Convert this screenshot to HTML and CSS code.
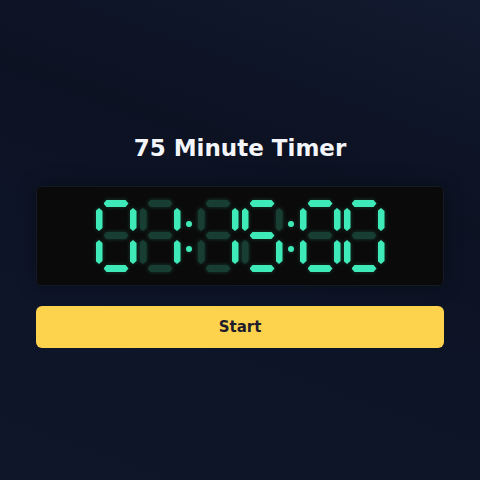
FILE: index.html
```html
<!DOCTYPE html>
<html lang="en">
<head>
<meta charset="utf-8">
<title>75 Minute Timer</title>
<link rel="stylesheet" href="styles.css">
</head>
<body>
<main class="timer">
  <h1 class="title">75 Minute Timer</h1>
  <div class="panel">
    <div class="clock" aria-label="01:15:00">
      <div class="pair">
        <div class="digit">
          <span class="seg h a on"></span><span class="seg v f on"></span><span class="seg v b on"></span><span class="seg h g"></span><span class="seg v e on"></span><span class="seg v c on"></span><span class="seg h d on"></span>
        </div>
        <div class="digit">
          <span class="seg h a"></span><span class="seg v f"></span><span class="seg v b on"></span><span class="seg h g"></span><span class="seg v e"></span><span class="seg v c on"></span><span class="seg h d"></span>
        </div>
      </div>
      <div class="colon"><span class="dot"></span><span class="dot"></span></div>
      <div class="pair">
        <div class="digit">
          <span class="seg h a"></span><span class="seg v f"></span><span class="seg v b on"></span><span class="seg h g"></span><span class="seg v e"></span><span class="seg v c on"></span><span class="seg h d"></span>
        </div>
        <div class="digit">
          <span class="seg h a on"></span><span class="seg v f on"></span><span class="seg v b"></span><span class="seg h g on"></span><span class="seg v e"></span><span class="seg v c on"></span><span class="seg h d on"></span>
        </div>
      </div>
      <div class="colon"><span class="dot"></span><span class="dot"></span></div>
      <div class="pair">
        <div class="digit">
          <span class="seg h a on"></span><span class="seg v f on"></span><span class="seg v b on"></span><span class="seg h g"></span><span class="seg v e on"></span><span class="seg v c on"></span><span class="seg h d on"></span>
        </div>
        <div class="digit">
          <span class="seg h a on"></span><span class="seg v f on"></span><span class="seg v b on"></span><span class="seg h g"></span><span class="seg v e on"></span><span class="seg v c on"></span><span class="seg h d on"></span>
        </div>
      </div>
    </div>
  </div>
  <button class="start" type="button">Start</button>
</main>
</body>
</html>
```
FILE: styles.css
```css
html, body {
  margin: 0;
  height: 100%;
}
body {
  background: linear-gradient(200deg, #121a30 0%, #0c1222 35%, #0e1529 70%, #0f1629 100%);
  font-family: "DejaVu Sans", "Liberation Sans", sans-serif;
  display: flex;
  align-items: center;
  justify-content: center;
}
.timer {
  width: 408px;
  display: flex;
  flex-direction: column;
  align-items: stretch;
  margin-top: 2px;
}
.title {
  margin: 0 0 24px;
  text-align: center;
  color: #f3f5f9;
  font-size: 23px;
  font-weight: bold;
  line-height: 28px;
}
.panel {
  background: #0a0a0a;
  border: 1px solid #141925;
  border-radius: 5px;
  padding: 13px 0;
  display: flex;
  justify-content: center;
  box-shadow: 0 0 18px rgba(0, 0, 0, 0.35);
}
.clock {
  display: flex;
  align-items: stretch;
  filter: drop-shadow(0 0 2px rgba(62, 235, 184, 0.25));
}
.pair {
  display: flex;
  gap: 3px;
}
.digit {
  display: grid;
  grid-template-columns: 7px 25px 7px;
  grid-template-rows: 7px 23px 7px 24px 7px;
  gap: 1px;
  width: 41px;
  height: 72px;
}
.seg {
  display: block;
  background: #183e33;
}
.seg.on {
  background: #3eebb8;
}
.seg.h {
  clip-path: polygon(3px 0, calc(100% - 3px) 0, 100% 50%, calc(100% - 3px) 100%, 3px 100%, 0 50%);
}
.seg.v {
  clip-path: polygon(50% 0, 100% 3px, 100% calc(100% - 3px), 50% 100%, 0 calc(100% - 3px), 0 3px);
}
.a { grid-row: 1; grid-column: 2; }
.f { grid-row: 2; grid-column: 1; }
.b { grid-row: 2; grid-column: 3; }
.g { grid-row: 3; grid-column: 2; }
.e { grid-row: 4; grid-column: 1; }
.c { grid-row: 4; grid-column: 3; }
.d { grid-row: 5; grid-column: 2; }
.colon {
  width: 17px;
  display: flex;
  flex-direction: column;
  align-items: center;
  justify-content: center;
  gap: 19px;
}
.dot {
  width: 6px;
  height: 6px;
  border-radius: 50%;
  background: #3eebb8;
}
.start {
  margin-top: 20px;
  height: 42px;
  border: none;
  border-radius: 6px;
  background: #fdd34d;
  color: #1f1d2c;
  font-family: "DejaVu Sans", "Liberation Sans", sans-serif;
  font-size: 15px;
  font-weight: bold;
  cursor: pointer;
}
```
